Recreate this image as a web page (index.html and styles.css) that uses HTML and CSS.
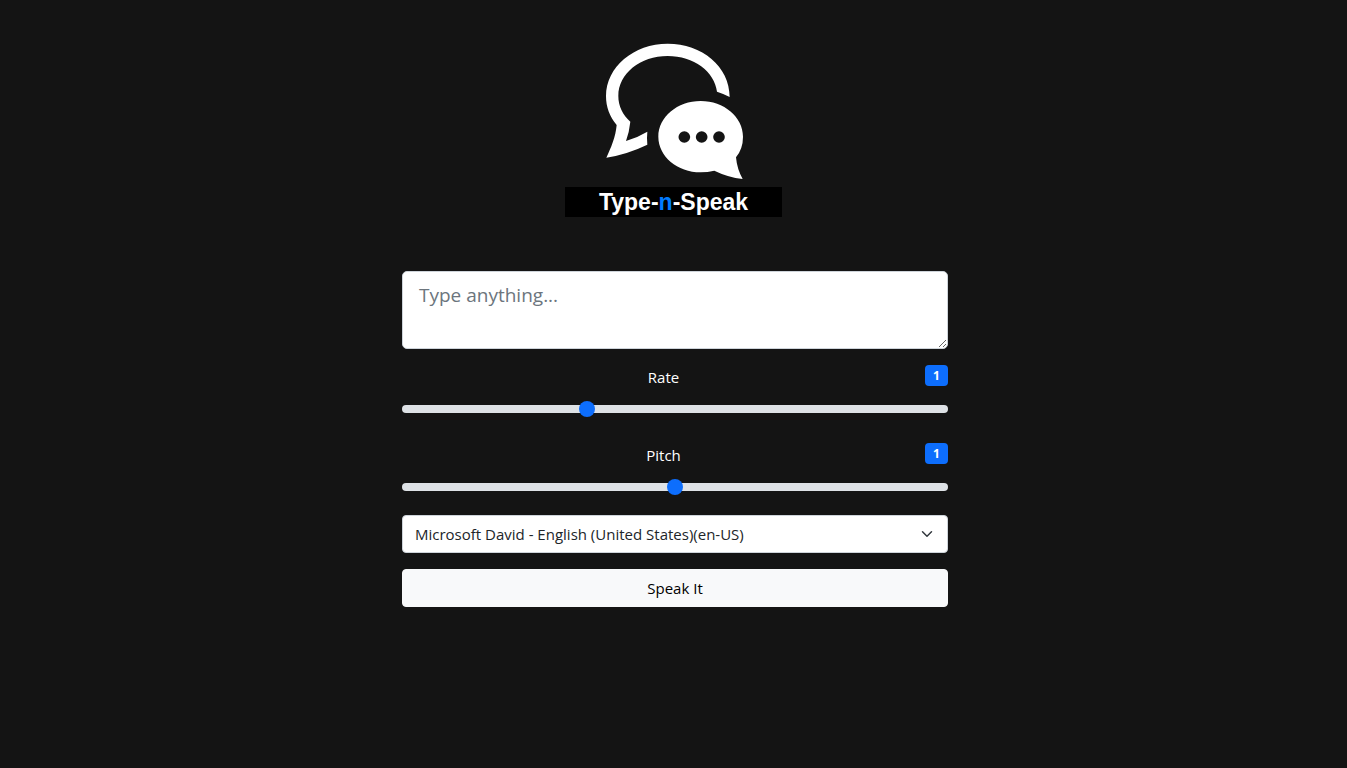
FILE: index.html
```html
<!DOCTYPE html>
<html lang="en">
<head>
  <meta charset="utf-8">
  <meta name="viewport" content="width=device-width, initial-scale=1">
  <title>Type-n-Speak</title>
  <link rel="stylesheet" href="styles.css">
</head>
<body>
  <header class="brand">
    <svg class="brand-icon" viewBox="15 15 651 441" aria-hidden="true">
      <path fill="#fff" d="M139 368C153 339 167 305 170 270C149 245 138 216 138 183C138 96 221 26 323 26C426 26 509 94 509 186Q490 176 471 170C464 110 401 63 323 63C241 63 175 116 175 183C175 213 188 240 211 260Q208 290 198 318Q232 308 262 290Q260 309 262 329Q202 358 139 368Z"/>
      <path fill="#fff" d="M422 198C492 198 549 246 549 305Q549 341 528 367Q531 402 548 432Q504 427 463 407Q443 412 422 412C352 412 295 364 295 305C295 246 352 198 422 198Z"/>
      <circle cx="373" cy="306" r="17.500" fill="#141414"/>
      <circle cx="425" cy="306" r="17.500" fill="#141414"/>
      <circle cx="477" cy="306" r="17.500" fill="#141414"/>
    </svg>
    <h1 class="brand-name">Type-<span class="brand-accent">n</span>-Speak</h1>
  </header>
  <main class="container">
    <form class="speak-form">
      <textarea class="text-input" rows="2" placeholder="Type anything..." aria-label="Text to speak"></textarea>
      <div class="slider-group">
        <div class="slider-head">
          <label class="slider-label" for="rate">Rate</label>
          <output class="badge" for="rate">1</output>
        </div>
        <input class="slider" type="range" id="rate" min="0.5" max="2" value="1" step="0.1">
      </div>
      <div class="slider-group">
        <div class="slider-head">
          <label class="slider-label" for="pitch">Pitch</label>
          <output class="badge" for="pitch">1</output>
        </div>
        <input class="slider" type="range" id="pitch" min="0" max="2" value="1" step="0.1">
      </div>
      <select class="voice-select" aria-label="Voice">
        <option>Microsoft David - English (United States)(en-US)</option>
      </select>
      <button class="speak-button" type="button">Speak It</button>
    </form>
  </main>
</body>
</html>
```

FILE: styles.css
```css
* {
  box-sizing: border-box;
}

body {
  margin: 0;
  min-height: 100vh;
  background: #141414;
  color: #fff;
  font-family: "Open Sans", "Noto Sans", sans-serif;
  font-size: 15px;
  line-height: 24px;
}

.brand {
  display: flex;
  flex-direction: column;
  width: 217px;
  margin: 0 auto;
  padding-top: 40px;
}

.brand-icon {
  display: block;
  width: 100%;
}

.brand-name {
  margin: 0;
  background: #000;
  font: bold 23px/30px "Liberation Sans", Arial, sans-serif;
  text-align: center;
}

.brand-accent {
  color: #007bff;
}

.container {
  max-width: 573px;
  margin: 54px auto 0;
  padding: 0 12px 0 15px;
}

.speak-form {
  display: flex;
  flex-direction: column;
}

.text-input {
  display: block;
  width: 100%;
  min-height: 78px;
  margin-bottom: 16px;
  padding: 8px 16px;
  border: 1px solid #ced4da;
  border-radius: 5px;
  background: #fff;
  color: #212529;
  font: 19px/30px "Open Sans", "Noto Sans", sans-serif;
  resize: vertical;
}

.text-input::placeholder {
  color: #6c757d;
}

.slider-group {
  margin-bottom: 22px;
}

.slider-group + .slider-group {
  margin-bottom: 16px;
}

.slider-head {
  display: flex;
  align-items: flex-start;
  margin-bottom: 8px;
}

.slider-label {
  flex: 1;
  text-align: center;
}

.badge {
  min-width: 23px;
  padding: 4px 8px;
  border-radius: 4px;
  background: #0d6efd;
  font-size: 12px;
  font-weight: 700;
  line-height: 13px;
  text-align: center;
}

.slider {
  display: block;
  width: 100%;
  height: 24px;
  margin: 0;
  background: transparent;
  appearance: none;
}

.slider::-webkit-slider-runnable-track {
  height: 8px;
  border-radius: 16px;
  background: #dee2e6;
}

.slider::-webkit-slider-thumb {
  width: 16px;
  height: 16px;
  margin-top: -4px;
  border-radius: 50%;
  background: #0d6efd;
  appearance: none;
}

.voice-select {
  width: 100%;
  height: 38px;
  margin-bottom: 16px;
  padding: 6px 36px 6px 12px;
  border: 1px solid #ced4da;
  border-radius: 4px;
  background: #fff url("data:image/svg+xml,%3Csvg xmlns='http://www.w3.org/2000/svg' viewBox='0 0 16 16'%3E%3Cpath fill='none' stroke='%23343a40' stroke-linecap='round' stroke-linejoin='round' stroke-width='2' d='M2 5l6 6 6-6'/%3E%3C/svg%3E") no-repeat right 14px center / 12px;
  color: #212529;
  font: inherit;
  appearance: none;
}

.speak-button {
  height: 38px;
  padding: 6px 12px;
  border: 1px solid #f8f9fa;
  border-radius: 4px;
  background: #f8f9fa;
  color: #000;
  font: inherit;
}
```
